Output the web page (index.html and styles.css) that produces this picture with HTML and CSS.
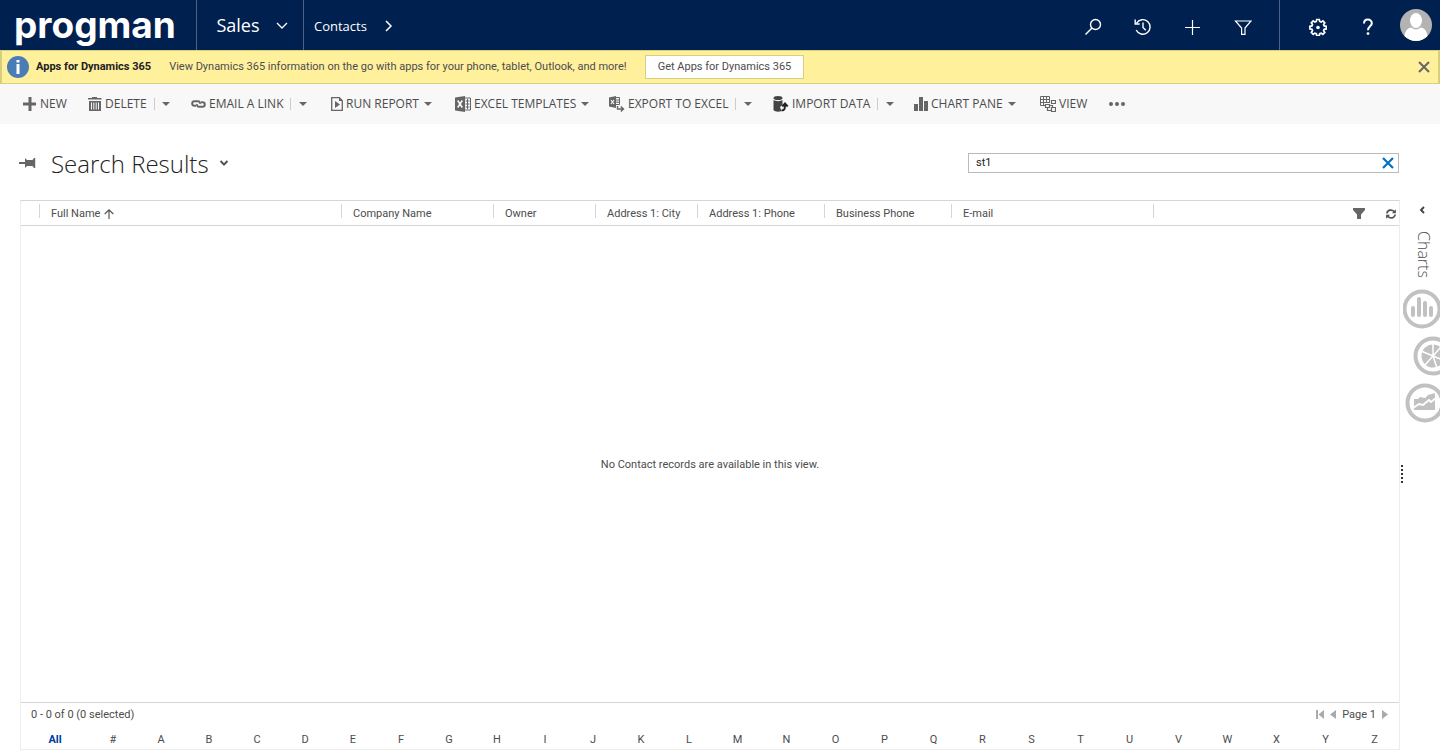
FILE: index.html
```html
<!DOCTYPE html>
<html lang="en">
<head>
<meta charset="utf-8">
<title>Contacts - Search Results</title>
<link rel="stylesheet" href="styles.css">
</head>
<body>
<header class="topbar">
  <a class="logo" href="#">progman</a>
  <button class="area" type="button">Sales
    <svg width="12" height="8" viewBox="0 0 12 8"><path d="M1 2l5 5 5-5" fill="none" stroke="currentColor" stroke-width="1.3"/></svg>
  </button>
  <nav class="crumbs">
    <a href="#">Contacts</a>
    <svg width="8" height="12" viewBox="0 0 8 12"><path d="M1 1l5 5-5 5" fill="none" stroke="currentColor" stroke-width="1.5"/></svg>
  </nav>
  <div class="tools">
    <button type="button" aria-label="Search"><svg width="18" height="18" viewBox="0 0 18 18"><g fill="none" stroke="currentColor" stroke-width="1.4"><circle cx="11.5" cy="6.5" r="5"/><path d="M8 10l-6.500 6.500"/></g></svg></button>
    <button type="button" aria-label="Recent"><svg width="18" height="18" viewBox="0 0 18 18"><g fill="none" stroke="currentColor" stroke-width="1.4"><path d="M2.500 5.300A7.300 7.300 0 1 1 2.200 12"/><path d="M1.200 1.500v4.500h4.500M9 4.500v5l2.800 2.800"/></g></svg></button>
    <button type="button" aria-label="Create"><svg width="18" height="18" viewBox="0 0 18 18"><path d="M8.500 2v15M1 9.500h15" stroke="currentColor" stroke-width="1.2"/></svg></button>
    <button type="button" aria-label="Advanced find"><svg width="18" height="18" viewBox="0 0 18 18"><path d="M1.500 3h15.500L11 10v6.300H7.600V10z" fill="none" stroke="currentColor" stroke-width="1.2"/></svg></button>
  </div>
  <div class="account">
    <button type="button" aria-label="Settings"><svg width="18" height="18" viewBox="0 0 18 18"><path d="M7.700 1.500h2.600l.4 2 1.500.6 1.700-1.200 1.900 1.900-1.200 1.700.6 1.400 2.100.4v2.600l-2.100.4-.6 1.400 1.200 1.700-1.900 1.900-1.700-1.200-1.500.6-.4 2H7.700l-.4-2-1.400-.6-1.700 1.200-1.900-1.900 1.200-1.700-.6-1.400-2-.4V8.300l2-.4.6-1.400-1.200-1.700 1.900-1.900 1.700 1.200 1.400-.6z" fill="none" stroke="currentColor" stroke-width="1.700"/><circle cx="9" cy="9.500" r="1.800" fill="currentColor"/></svg></button>
    <button type="button" aria-label="Help"><svg width="18" height="18" viewBox="0 0 18 18"><path d="M5 5.500C5 .2 12.800.5 12.800 5.200c0 3-3.800 3.300-3.800 7" fill="none" stroke="currentColor" stroke-width="2"/><circle cx="9" cy="15.600" r="1.400" fill="currentColor"/></svg></button>
    <button type="button" aria-label="User"><svg width="32" height="32" viewBox="0 0 32 32"><clipPath id="face"><circle cx="16" cy="16" r="16"/></clipPath><g clip-path="url(#face)"><path d="M0 0h32v32H0z" fill="#b3b3b3"/><path d="M4 32c0-9 3-13 7.500-13.500 3 2.500 6 2.500 9 0C25 19 28 23 28 32z" fill="#fff"/><ellipse cx="16" cy="11.500" rx="6" ry="7.500" fill="#fff"/></g></svg></button>
  </div>
</header>

<section class="notice">
  <svg width="22" height="22" viewBox="0 0 22 22"><circle cx="11" cy="11" r="11" fill="#4a7db5"/><path d="M9.500 4h3v2.500h-3zM9.500 8h3v10h-3z" fill="#fff"/></svg>
  <strong>Apps for Dynamics 365</strong>
  <span class="notice-text">View Dynamics 365 information on the go with apps for your phone, tablet, Outlook, and more!</span>
  <button class="get-apps" type="button">Get Apps for Dynamics 365</button>
  <button class="dismiss" type="button" aria-label="Close"><svg width="12" height="12" viewBox="0 0 12 12"><path d="M1 1l10 10M11 1L1 11" stroke="#666" stroke-width="2"/></svg></button>
</section>

<nav class="commands">
  <div class="command"><button type="button"><svg width="15" height="14" viewBox="0 0 15 14"><path d="M6.500 0h3v5.500H14v3H9.500V14h-3V8.500H1v-3h5.500z"/></svg>NEW</button></div>
  <div class="command"><button type="button"><svg width="14" height="16" viewBox="0 0 14 16"><path d="M4 1h5v1h4.500v1.500H0V2h4zM1 5h12v10H1z"/><path d="M3.500 6.500v7M5.800 6.500v7M8.200 6.500v7M10.500 6.500v7" stroke="#f8f8f8"/></svg>DELETE</button><button class="more split" type="button" aria-label="Delete options"><i></i></button></div>
  <div class="command"><button type="button"><svg width="15" height="10" viewBox="0 0 15 10"><g fill="none" stroke="currentColor" stroke-width="2"><path d="M5 6.800H3.500A2.300 2.300 0 0 1 3.500 2.200H7c1.500 0 2.300 1.300 1.800 2.600"/><path d="M10 3.200h1.500a2.300 2.300 0 0 1 0 4.600H8c-1.500 0-2.300-1.300-1.800-2.600"/></g></svg>EMAIL A LINK</button><button class="more split" type="button" aria-label="Email options"><i></i></button></div>
  <div class="command"><button type="button"><svg width="12" height="14" viewBox="0 0 12 14"><path d="M.7.700h7.600l3 3v9.600H.7z" fill="none" stroke="currentColor" stroke-width="1.300"/><path d="M8 0v4h4M4 4l5 3.500L4 11z"/></svg>RUN REPORT</button><button class="more" type="button" aria-label="Report options"><i></i></button></div>
  <div class="command"><button type="button"><svg width="16" height="16" viewBox="0 0 16 16"><path d="M0 1.500L10 0v16L0 14.500z"/><path d="M10 2h5.500v12H10M10.500 5h4M10.500 8h4M10.500 11h4M12.500 3v10" fill="none" stroke="currentColor" stroke-width="1"/><path d="M2.700 4.500l4.600 7M7.300 4.500l-4.600 7" stroke="#f8f8f8" stroke-width="1.600"/></svg>EXCEL TEMPLATES</button><button class="more" type="button" aria-label="Template options"><i></i></button></div>
  <div class="command"><button type="button"><svg width="16" height="16" viewBox="0 0 16 16"><path d="M0 1.500L7 0v12L0 10.500z"/><path d="M7 1.500h3.500v7H7M7 4h3M7 6.200h3" fill="none" stroke="currentColor"/><path d="M2 4l3 4M5 4L2 8" stroke="#f8f8f8" stroke-width="1.200"/><path d="M8.500 10v3H14M11.800 10.500l2.700 2.500-2.700 2.500" fill="none" stroke="currentColor" stroke-width="1.400"/></svg>EXPORT TO EXCEL</button><button class="more split" type="button" aria-label="Export options"><i></i></button></div>
  <div class="command"><button type="button"><svg width="16" height="16" viewBox="0 0 16 16"><g fill="#444"><ellipse cx="5" cy="2" rx="4.500" ry="2"/><path d="M.5 4c2 1.500 7 1.500 9 0v5L7 11l1.500 4C6 16 2 16 .5 14z"/></g><path d="M8.500 14.500c3 0 3.500-1.500 3.500-6M9.300 10.500L12 7.500l2.700 3" fill="none" stroke="#222" stroke-width="1.900"/></svg>IMPORT DATA</button><button class="more split" type="button" aria-label="Import options"><i></i></button></div>
  <div class="command"><button type="button"><svg width="14" height="14" viewBox="0 0 14 14"><path d="M0 7h4v7H0zM5 0h4v14H5zM10 4h4v10h-4z"/></svg>CHART PANE</button><button class="more" type="button" aria-label="Chart options"><i></i></button></div>
  <div class="command"><button type="button"><svg width="16" height="16" viewBox="0 0 16 16"><path d="M.5.500h9v9h-9zM.5 3.500h9M.5 6.500h9M3.500.500v9M6.500.500v9" fill="none" stroke="currentColor"/><path d="M5 7h11v9H5z" fill="#f8f8f8"/><path d="M11.500 4.500h4v3h-4zM5.500 8.500h4v3h-4zM11.500 11.500h4v4h-4zM7.500 12v2.500h3.500M9.500 9.500h3v2" fill="none" stroke="currentColor" stroke-width="1.200"/></svg>VIEW</button></div>
  <div class="command"><button type="button" aria-label="More commands"><svg width="16" height="6" viewBox="0 0 16 6"><circle cx="2" cy="3" r="2"/><circle cx="8" cy="3" r="2"/><circle cx="14" cy="3" r="2"/></svg></button></div>
</nav>

<main class="content">
  <div class="view">
    <div class="view-head">
      <button class="pin" type="button" aria-label="Pin view"><svg width="18" height="12" viewBox="0 0 18 12"><path d="M0 5h6V1l2 2h5.500L15 1h1.200v10H15l-1.500-2H8l-2 2V7H0z" fill="#666"/></svg></button>
      <h1>Search Results</h1>
      <button class="pick" type="button" aria-label="Select view"><svg width="10" height="8" viewBox="0 0 10 8"><path d="M1.500 2L5 5.500 8.500 2" fill="none" stroke="#555" stroke-width="2"/></svg></button>
      <label class="search"><input type="text" value="st1" aria-label="Search for records"><button type="button" aria-label="Clear search"><svg width="12" height="12" viewBox="0 0 12 12"><path d="M1 1l10 10M11 1L1 11" stroke="#0072c6" stroke-width="2.200"/></svg></button></label>
    </div>

    <div class="grid">
      <table class="records">
        <colgroup><col class="w-check"><col class="w-name"><col class="w-company"><col class="w-short"><col class="w-short"><col class="w-phone"><col class="w-phone"><col class="w-mail"><col></colgroup>
        <thead><tr>
          <td></td>
          <th scope="col">Full Name <svg width="10" height="10" viewBox="0 0 10 10"><path d="M5 10V1M.7 5L5 .900 9.300 5" fill="none" stroke="#555" stroke-width="1.200"/></svg></th>
          <th scope="col">Company Name</th><th scope="col">Owner</th><th scope="col">Address 1: City</th><th scope="col">Address 1: Phone</th><th scope="col">Business Phone</th><th scope="col">E-mail</th>
          <td><div class="grid-tools">
            <button type="button" aria-label="Filter"><svg width="12" height="12" viewBox="0 0 12 12"><path d="M0 0h12v2L8 6.500V11H4V6.500L0 2z" fill="#666"/></svg></button>
            <button type="button" aria-label="Refresh"><svg width="10" height="10" viewBox="0 0 10 10"><g fill="none" stroke="#555" stroke-width="1.700"><path d="M.9 4.500C1.300 1 5.500-.2 8.300 2.600M9.100 5.500C8.700 9 4.500 10.200 1.700 7.400"/></g><path d="M9.900.200V4.200H5.900zM.1 9.800V5.800h4z" fill="#555"/></svg></button>
          </div></td>
        </tr></thead>
      </table>
      <p class="empty">No Contact records are available in this view.</p>
      <div class="status">
        <span>0 - 0 of 0 (0 selected)</span>
        <div class="pager">
          <button type="button" aria-label="First page"><svg width="8" height="9" viewBox="0 0 8 9"><path d="M0 0h2v9H0zM8 0v9L2.500 4.500z"/></svg></button>
          <button type="button" aria-label="Previous page"><svg width="6" height="9" viewBox="0 0 6 9"><path d="M6 0v9L0 4.500z"/></svg></button>
          <span>Page 1</span>
          <button type="button" aria-label="Next page"><svg width="6" height="9" viewBox="0 0 6 9"><path d="M0 0v9l6-4.500z"/></svg></button>
        </div>
      </div>
      <nav class="letters">
        <a class="current" href="#">All</a><a href="#">#</a><a href="#">A</a><a href="#">B</a><a href="#">C</a><a href="#">D</a><a href="#">E</a><a href="#">F</a><a href="#">G</a><a href="#">H</a><a href="#">I</a><a href="#">J</a><a href="#">K</a><a href="#">L</a><a href="#">M</a><a href="#">N</a><a href="#">O</a><a href="#">P</a><a href="#">Q</a><a href="#">R</a><a href="#">S</a><a href="#">T</a><a href="#">U</a><a href="#">V</a><a href="#">W</a><a href="#">X</a><a href="#">Y</a><a href="#">Z</a>
      </nav>
    </div>
  </div>

  <aside class="charts">
    <button class="expand" type="button" aria-label="Expand charts"><svg width="8" height="8" viewBox="0 0 8 8"><path d="M6 1L3 4l3 3" fill="none" stroke="#444" stroke-width="1.900"/></svg></button>
    <span class="charts-title">Charts</span>
    <button class="chart" type="button" aria-label="Column chart"><svg width="40" height="40" viewBox="0 0 40 40"><circle cx="19" cy="20" r="17.500" fill="none" stroke="#c1c1c1" stroke-width="4"/><path d="M10 19v7M16 10v16M22 14v12M28 19v7" stroke="#c1c1c1" stroke-width="4" stroke-linecap="round"/></svg></button>
    <button class="chart pie" type="button" aria-label="Pie chart"><svg width="40" height="40" viewBox="0 0 40 40"><circle cx="20" cy="20" r="17.500" fill="none" stroke="#c1c1c1" stroke-width="4"/><circle cx="20" cy="20" r="11.500" fill="#c1c1c1"/><path d="M20 8v12M8 15l24 10M12 29L28 11M20 20l4 12" stroke="#fff" stroke-width="1.500"/></svg></button>
    <button class="chart line" type="button" aria-label="Area chart"><svg width="40" height="40" viewBox="0 0 40 40"><circle cx="20" cy="20" r="17.500" fill="none" stroke="#c1c1c1" stroke-width="4"/><path d="M9 27V16h4l2-2 5 1 3-3 7-2v17z" fill="#c1c1c1"/><path d="M8 25l6-4 4 1 6-5 2 2 5-4" fill="none" stroke="#fff" stroke-width="1.900"/></svg></button>
    <svg class="handle" width="2" height="18" viewBox="0 0 2 18"><path d="M0 0h2v2H0zM0 4h2v2H0zM0 8h2v2H0zM0 12h2v2H0zM0 16h2v2H0z" fill="#333"/></svg>
  </aside>
</main>
</body>
</html>
```

FILE: styles.css
```css
* { box-sizing: border-box; }
body {
  margin: 0;
  min-height: 100vh;
  display: flex;
  flex-direction: column;
  font: 11px/16px Roboto, "Open Sans", sans-serif;
  color: #4c4c4c;
  background: #fff;
}
button {
  display: inline-flex;
  align-items: center;
  justify-content: center;
  padding: 0;
  border: 0;
  background: none;
  color: inherit;
  font: inherit;
}
a { color: inherit; text-decoration: none; }
svg { display: block; flex: none; }

.topbar { display: flex; height: 50px; background: #00204f; color: #fff; }
.logo {
  width: 196px;
  padding-left: 14px;
  font: 700 37px/50px Inter, sans-serif;
}
.area {
  width: 108px;
  gap: 16px;
  padding-left: 4px;
  border: solid #4d6384;
  border-width: 0 1px;
  font: 18px/50px "Open Sans", sans-serif;
}
.crumbs { display: flex; align-items: center; gap: 18px; padding: 2px 0 0 10px; font: 13px/18px "Open Sans", sans-serif; }
.tools, .account { display: flex; align-items: center; }
.tools { gap: 32px; margin-left: auto; padding: 4px 27px 0 0; }
.account { gap: 32px; width: 161px; padding-left: 29px; border-left: 1px solid #4d6384; }
.account button { margin-top: 4px; }
.account button:last-child { margin: 0 0 0 -9px; }

.notice {
  display: flex;
  align-items: center;
  height: 34px;
  padding: 0 8px 0 5px;
  border: 1px solid #d6d07e;
  border-width: 1px 2px;
  background: #fff09c;
}
.notice strong { margin: 0 18px 0 7px; color: #222; }
.get-apps { height: 24px; margin-left: 18px; padding: 0 12px; border: 1px solid #d6d07e; background: #fff; }
.dismiss { margin-left: auto; }

.commands {
  display: grid;
  grid-template-columns: 66px 103px 140px 124px 154px 164px 141px 126px 69px 1fr;
  align-items: center;
  height: 40px;
  padding-left: 22px;
  background: #f8f8f8;
  font: 12px/16px "Open Sans", sans-serif;
}
.command { display: flex; align-items: center; white-space: nowrap; }
.command button { gap: 3px; height: 24px; }
.command svg { fill: #666; color: #666; }
.command .more { width: 18px; }
.command .split { width: 24px; height: 12px; margin-left: 7px; border-left: 1px solid #ccc; }
.more i { border: solid transparent; border-width: 4px 4px 0; border-top-color: #666; }

.content { flex: 1; display: flex; }
.view { flex: 1; display: flex; flex-direction: column; }
.view-head { display: flex; align-items: center; height: 76px; padding: 2px 1px 0 19px; }
h1 { margin: 0 10px 0 14px; padding-top: 2px; font: 300 24px/36px "Open Sans", sans-serif; color: #222; }
.search { display: flex; width: 431px; height: 20px; margin-left: auto; padding: 0 4px 0 7px; border: 1px solid #bbb; }
.search input { flex: 1; min-width: 0; padding: 0; border: 0; outline: 0; background: none; font: inherit; color: #222; }

.grid { flex: 1; display: flex; flex-direction: column; margin-left: 20px; border: 1px solid #ededed; border-top-color: #d6d6d6; }
.records { width: 100%; table-layout: fixed; border-collapse: collapse; }
.records tr { height: 24px; border-bottom: 1px solid #d6d6d6; }
.records th, .records td { padding: 2px 0 0; text-align: left; font-weight: 400; white-space: nowrap; }
.records th { padding-left: 12px; background: linear-gradient(#d6d6d6, #d6d6d6) 0 3px / 1px 14px no-repeat; }
.records td:last-child { background: linear-gradient(#d6d6d6, #d6d6d6) 0 3px / 1px 14px no-repeat; }
.records th svg { display: inline-block; margin-left: 1px; vertical-align: middle; }
.w-check { width: 18px; }
.w-name { width: 302px; }
.w-company { width: 152px; }
.w-short { width: 102px; }
.w-phone { width: 127px; }
.w-mail { width: 202px; }
.grid-tools { display: flex; justify-content: flex-end; align-items: center; gap: 21px; padding-right: 3px; }
.empty { flex: 1; display: flex; align-items: center; justify-content: center; margin: 0; padding-top: 2px; }
.status { display: flex; align-items: center; justify-content: space-between; height: 24px; padding: 0 11px 0 10px; border-top: 1px solid #d6d6d6; }
.pager { display: flex; align-items: center; gap: 6px; }
.pager svg { fill: #aaa; }
.letters { display: grid; grid-template-columns: 68px repeat(13, 48fr) repeat(14, 49fr); align-items: center; height: 23px; padding-top: 4px; text-align: center; }
.letters .current { color: #003ca0; font-weight: 700; }

.charts { display: flex; flex-direction: column; width: 40px; padding-top: 82px; overflow: hidden; }
.expand { margin-left: 18px; width: 8px; }
.charts-title { width: 24px; margin: 17px 0 11px 12px; font: 300 16px/24px "Open Sans", sans-serif; writing-mode: vertical-rl; }
.chart { width: 40px; margin: 0 0 7px 3px; }
.pie { margin-left: 13px; }
.line { margin-left: 5px; }
.handle { margin: 35px 0 0 1px; }
```
